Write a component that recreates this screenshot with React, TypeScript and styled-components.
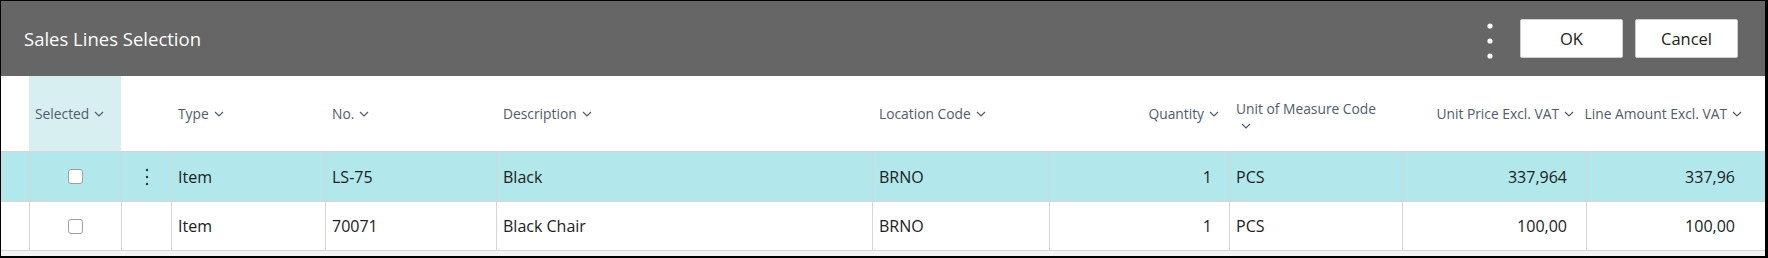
import React from 'react'
import styled, { createGlobalStyle } from 'styled-components'

const GlobalStyle = createGlobalStyle`
  body {
    margin: 0;
    font-family: "Open Sans", "Noto Sans", sans-serif;
  }
`

type Align = 'left' | 'right' | 'center'

interface Column {
  key: string
  label: string
  width: number
  align: Align
  padL?: number
  padR?: number
  stacked?: boolean
}

const columns: Column[] = [
  { key: 'gutter', label: '', width: 28, align: 'left' },
  { key: 'selected', label: 'Selected', width: 92, align: 'center', padL: 6 },
  { key: 'menu', label: '', width: 50, align: 'center' },
  { key: 'type', label: 'Type', width: 154, align: 'left' },
  { key: 'no', label: 'No.', width: 171, align: 'left' },
  { key: 'description', label: 'Description', width: 376, align: 'left' },
  { key: 'location', label: 'Location Code', width: 177, align: 'left' },
  { key: 'quantity', label: 'Quantity', width: 180, align: 'right', padR: 17 },
  { key: 'uom', label: 'Unit of Measure Code', width: 173, align: 'left', stacked: true },
  { key: 'price', label: 'Unit Price Excl. VAT', width: 184, align: 'right', padR: 19 },
  { key: 'amount', label: 'Line Amount Excl. VAT', width: 179, align: 'right', padR: 30 },
]

const rows = [
  { selected: true, type: 'Item', no: 'LS-75', description: 'Black', location: 'BRNO', quantity: '1', uom: 'PCS', price: '337,964', amount: '337,96' },
  { selected: false, type: 'Item', no: '70071', description: 'Black Chair', location: 'BRNO', quantity: '1', uom: 'PCS', price: '100,00', amount: '100,00' },
]

const Dialog = styled.div`
  width: 1768px;
  height: 258px;
  box-sizing: border-box;
  border-style: solid;
  border-color: #000;
  border-width: 1px 3px 2px 1px;
  display: flex;
  flex-direction: column;
  background: #fff;
`

const TitleBar = styled.div`
  height: 75px;
  flex: none;
  background: #666666;
  display: flex;
  align-items: center;
  padding: 0 27px 0 23px;
`

const Title = styled.div`
  flex: 1;
  color: #fff;
  font-size: 18.5px;
`

const MoreIcon = styled.svg`
  margin-top: 5px;
  margin-right: 15px;
`

const ActionButton = styled.button`
  width: 103px;
  height: 39px;
  margin-left: 12px;
  background: #fff;
  border: 1px solid #d0d0d0;
  border-radius: 2px;
  font-family: inherit;
  font-size: 16.5px;
  color: #212121;
  padding: 0;
`

const Grid = styled.div`
  display: grid;
  grid-template-columns: ${columns.map(c => `${c.width}px`).join(' ')};
`

const HeaderCell = styled.div<{ $align: Align; $active?: boolean; $stacked?: boolean; $padL: number; $padR: number }>`
  height: 75px;
  border-bottom: 1px solid #d6d6d6;
  box-sizing: content-box;
  display: flex;
  flex-direction: ${({ $stacked }) => ($stacked ? 'column' : 'row')};
  justify-content: ${({ $align, $stacked }) => ($stacked ? 'center' : $align === 'right' ? 'flex-end' : 'flex-start')};
  align-items: ${({ $stacked }) => ($stacked ? 'flex-start' : 'center')};
  padding: 0 ${({ $padR }) => $padR}px 0 ${({ $padL }) => $padL}px;
  background: ${({ $active }) => ($active ? '#d7eff1' : '#fff')};
  color: #505c6d;
  font-size: 13.8px;
  white-space: nowrap;
  overflow: visible;
`

const Label = styled.span`
  flex: none;
`

const Chevron = styled.svg<{ $stacked?: boolean }>`
  flex: none;
  margin-left: 5px;
  margin-top: ${({ $stacked }) => ($stacked ? '5px' : '1px')};
`

const DataCell = styled.div<{ $align: Align; $highlight: boolean; $height: number; $edge: boolean; $padL: number; $padR: number }>`
  height: ${({ $height }) => $height}px;
  box-sizing: border-box;
  border-bottom: 1px solid #d6d6d6;
  border-left: ${({ $edge }) => ($edge ? 'none' : '1px solid #d6d6d6')};
  background: ${({ $highlight }) => ($highlight ? '#b2e8eb' : '#fff')};
  display: flex;
  align-items: center;
  justify-content: ${({ $align }) => ($align === 'right' ? 'flex-end' : $align === 'center' ? 'center' : 'flex-start')};
  padding: 0 ${({ $padR }) => $padR}px 0 ${({ $padL }) => $padL}px;
  color: #212121;
  font-size: 16px;
  white-space: nowrap;
`

const Checkbox = styled.span`
  width: 15px;
  height: 15px;
  box-sizing: border-box;
  border: 1.5px solid #9f9f9f;
  border-radius: 3px;
  background: #fff;
`

const Footer = styled.div`
  flex: 1;
  background: #f3f3f5;
`

function ChevronDown({ stacked }: { stacked?: boolean }) {
  return (
    <Chevron $stacked={stacked} width="10" height="6" viewBox="0 0 10 6">
      <path d="M1 1l4 4 4-4" fill="none" stroke="currentColor" strokeWidth="1.2" />
    </Chevron>
  )
}

function RowMenu() {
  return (
    <svg width="4" height="18" viewBox="0 0 4 18">
      <circle cx="2" cy="2" r="1.2" fill="#333" />
      <circle cx="2" cy="9" r="1.2" fill="#333" />
      <circle cx="2" cy="16" r="1.2" fill="#333" />
    </svg>
  )
}

export default function App() {
  return (
    <>
      <GlobalStyle />
      <Dialog>
        <TitleBar>
          <Title>Sales Lines Selection</Title>
          <MoreIcon width="6" height="36" viewBox="0 0 6 36">
            <circle cx="3" cy="3" r="2.6" fill="#fff" />
            <circle cx="3" cy="18" r="2.6" fill="#fff" />
            <circle cx="3" cy="33" r="2.6" fill="#fff" />
          </MoreIcon>
          <ActionButton>OK</ActionButton>
          <ActionButton>Cancel</ActionButton>
        </TitleBar>
        <Grid>
          {columns.map(c => (
            <HeaderCell
              key={c.key}
              $align={c.align}
              $active={c.key === 'selected'}
              $stacked={c.stacked}
              $padL={c.padL ?? 7}
              $padR={c.align === 'right' ? (c.padR ?? 17) - 7 : 0}
            >
              {c.label && <Label>{c.label}</Label>}
              {c.label && <ChevronDown stacked={c.stacked} />}
            </HeaderCell>
          ))}
          {rows.map((r, i) =>
            columns.map(c => {
              let content: React.ReactNode = null
              if (c.key === 'selected') content = <Checkbox />
              else if (c.key === 'menu') content = r.selected ? <RowMenu /> : null
              else if (c.key !== 'gutter') content = (r as Record<string, unknown>)[c.key] as string
              return (
                <DataCell
                  key={`${i}-${c.key}`}
                  $align={c.key === 'selected' || c.key === 'menu' ? 'center' : c.align}
                  $highlight={r.selected}
                  $height={i === 0 ? 50 : 49}
                  $edge={c.key === 'gutter'}
                  $padL={c.align === 'left' && c.key !== 'gutter' ? 6 : 0}
                  $padR={c.align === 'right' ? c.padR ?? 17 : 0}
                >
                  {content}
                </DataCell>
              )
            })
          )}
        </Grid>
        <Footer />
      </Dialog>
    </>
  )
}
